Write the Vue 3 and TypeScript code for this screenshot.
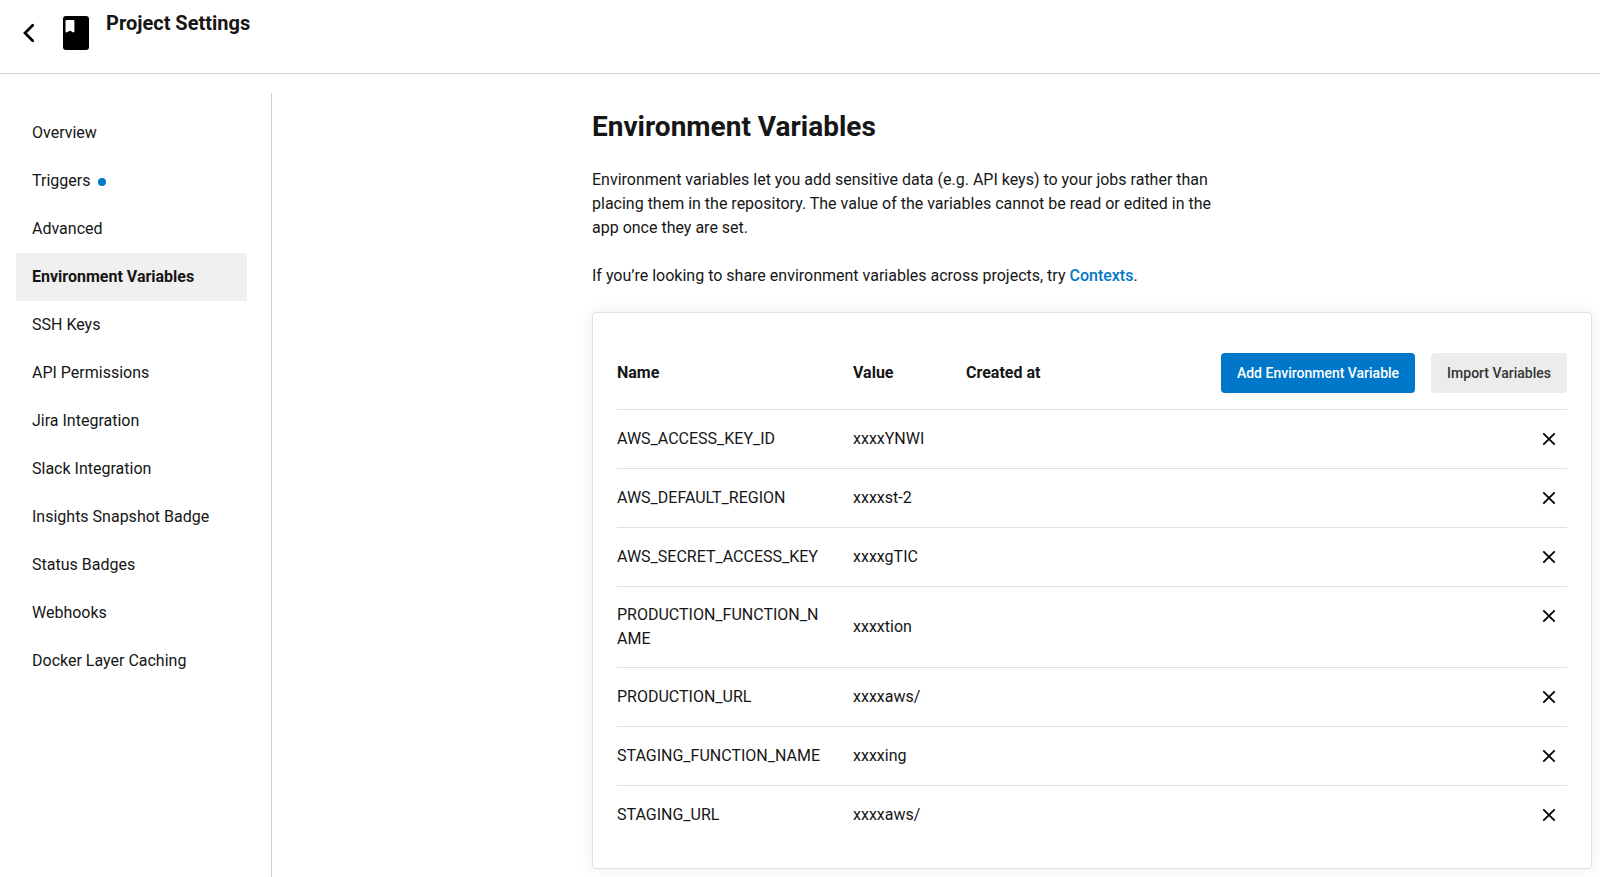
<script setup lang="ts">
import { ref } from 'vue'

interface NavItem {
  label: string
  isNew?: boolean
}

interface EnvVariable {
  name: string
  value: string
}

const navItems: NavItem[] = [
  { label: 'Overview' },
  { label: 'Triggers', isNew: true },
  { label: 'Advanced' },
  { label: 'Environment Variables' },
  { label: 'SSH Keys' },
  { label: 'API Permissions' },
  { label: 'Jira Integration' },
  { label: 'Slack Integration' },
  { label: 'Insights Snapshot Badge' },
  { label: 'Status Badges' },
  { label: 'Webhooks' },
  { label: 'Docker Layer Caching' },
]

const active = ref('Environment Variables')

const variables = ref<EnvVariable[]>([
  { name: 'AWS_ACCESS_KEY_ID', value: 'xxxxYNWI' },
  { name: 'AWS_DEFAULT_REGION', value: 'xxxxst-2' },
  { name: 'AWS_SECRET_ACCESS_KEY', value: 'xxxxgTIC' },
  { name: 'PRODUCTION_FUNCTION_NAME', value: 'xxxxtion' },
  { name: 'PRODUCTION_URL', value: 'xxxxaws/' },
  { name: 'STAGING_FUNCTION_NAME', value: 'xxxxing' },
  { name: 'STAGING_URL', value: 'xxxxaws/' },
])

function removeVariable(name: string) {
  variables.value = variables.value.filter((v) => v.name !== name)
}
</script>

<template>
  <div class="page">
    <header class="topbar">
      <a class="back" href="#" aria-label="Back">
        <svg width="12" height="20" viewBox="0 0 12 20" aria-hidden="true">
          <path d="M9.700 2.300 2 10l7.700 7.700" fill="none" stroke="currentColor" stroke-width="2.700" stroke-linecap="round" />
        </svg>
      </a>
      <svg class="project-icon" width="28" height="34" viewBox="0 0 28 34" aria-hidden="true">
        <path
          fill="currentColor"
          fill-rule="evenodd"
          d="M4 0h20a3 3 0 0 1 3 3v28a3 3 0 0 1-3 3H4a3 3 0 0 1-3-3V3a3 3 0 0 1 3-3zM4.500 4a1 1 0 0 0-1 1v10.500c0 .9.700 1.200 1.400.8l2.500-1.300q.6-.3 1.200 0l2.400 1.300c.7.4 1.400 0 1.400-.8V5a1 1 0 0 0-1-1z"
        />
      </svg>
      <h1 class="topbar-title">Project Settings</h1>
    </header>

    <div class="body">
      <nav class="sidebar" aria-label="Project settings">
        <a
          v-for="item in navItems"
          :key="item.label"
          class="nav-link"
          :class="{ active: item.label === active }"
          :aria-current="item.label === active ? 'page' : undefined"
          href="#"
          @click.prevent="active = item.label"
        >
          {{ item.label }}<span v-if="item.isNew" class="dot"></span>
        </a>
      </nav>

      <main class="content">
        <h2 class="heading">Environment Variables</h2>
        <div class="intro">
          <p>
            Environment variables let you add sensitive data (e.g. API keys) to your jobs rather than placing them in
            the repository. The value of the variables cannot be read or edited in the app once they are set.
          </p>
          <p>
            If you’re looking to share environment variables across projects, try
            <a class="link" href="#">Contexts</a>.
          </p>
        </div>

        <section class="card">
          <table class="vars">
            <thead>
              <tr>
                <th class="col-name" scope="col">Name</th>
                <th class="col-value" scope="col">Value</th>
                <th class="col-created" scope="col">Created at</th>
                <td class="col-actions">
                  <div class="actions">
                    <button class="btn primary" type="button">Add Environment Variable</button>
                    <button class="btn secondary" type="button">Import Variables</button>
                  </div>
                </td>
              </tr>
            </thead>
            <tbody>
              <tr v-for="v in variables" :key="v.name">
                <td class="name">{{ v.name }}</td>
                <td>{{ v.value }}</td>
                <td></td>
                <td class="remove-cell">
                  <button class="remove" type="button" :aria-label="`Delete ${v.name}`" @click="removeVariable(v.name)">
                    <svg width="14" height="14" viewBox="0 0 14 14" aria-hidden="true">
                      <path d="M1.300 1.300l11.400 11.400M12.700 1.300 1.300 12.700" fill="none" stroke="currentColor" stroke-width="1.800" />
                    </svg>
                  </button>
                </td>
              </tr>
            </tbody>
          </table>
        </section>
      </main>
    </div>
  </div>
</template>

<style>
body {
  margin: 0;
  background: #fff;
}
</style>

<style scoped>
.page {
  display: flex;
  flex-direction: column;
  min-height: 100vh;
  color: #161616;
  font-family: Roboto, 'Liberation Sans', sans-serif;
  font-size: 16px;
  line-height: 24px;
}

.page *,
.page {
  box-sizing: border-box;
}

.topbar {
  display: flex;
  align-items: flex-start;
  padding: 8px 24px 16px 23px;
  min-height: 74px;
  border-bottom: 1px solid #d0d0d0;
}

.back {
  display: flex;
  margin-top: 15px;
  color: #000;
}

.project-icon {
  margin: 8px 16px 0 27px;
  color: #000;
}

.topbar-title {
  margin: 0;
  font-size: 20px;
  line-height: 30px;
  font-weight: 700;
}

.body {
  display: flex;
  flex: 1;
  padding-top: 19px;
}

.sidebar {
  flex: 0 0 272px;
  padding: 16px 24px 16px 16px;
  border-right: 1px solid #d0d0d0;
}

.nav-link {
  display: flex;
  align-items: center;
  height: 48px;
  padding: 0 16px;
  color: inherit;
  text-decoration: none;
}

.nav-link.active {
  background: #f0f0f0;
  font-weight: 700;
}

.dot {
  width: 8px;
  height: 8px;
  margin: 2px 0 0 8px;
  border-radius: 50%;
  background: #0078ca;
}

.content {
  flex: 0 1 1000px;
  min-width: 0;
  margin: 0 8px 8px auto;
}

.heading {
  margin: 14px 0 21px;
  font-size: 28px;
  line-height: 40px;
  font-weight: 700;
}

.intro {
  max-width: 640px;
}

.intro p {
  margin: 0 0 24px;
}

.link {
  color: #0078ca;
  font-weight: 500;
  text-decoration: none;
}

.card {
  padding: 24px;
  border: 1px solid #e0e0e0;
  border-radius: 4px;
  background: #fff;
  box-shadow: 0 0 16px rgba(0, 0, 0, 0.08);
}

.vars {
  width: 100%;
  table-layout: fixed;
  border-collapse: separate;
  border-spacing: 0;
}

.vars th,
.vars td {
  padding: 16px 0;
  text-align: left;
  vertical-align: middle;
}

.vars tbody td {
  border-top: 1px solid #e0e0e0;
}

.vars .col-name {
  width: 236px;
}

.vars .col-value {
  width: 113px;
}

.vars .col-created {
  width: 170px;
}

.vars .name {
  padding-right: 32px;
  overflow-wrap: anywhere;
}

.actions {
  display: flex;
  justify-content: flex-end;
  gap: 16px;
}

.btn {
  height: 40px;
  padding: 0 16px;
  border: 0;
  border-radius: 4px;
  font-family: inherit;
  font-size: 14px;
  line-height: 20px;
  font-weight: 500;
  white-space: nowrap;
  cursor: pointer;
}

.primary {
  background: #0078ca;
  color: #fff;
}

.secondary {
  background: #ececec;
  color: #343434;
}

.vars .remove-cell {
  text-align: right;
  vertical-align: top;
}

.remove {
  display: flex;
  align-items: center;
  justify-content: center;
  width: 36px;
  height: 26px;
  margin-left: auto;
  padding: 0;
  border: 0;
  background: none;
  color: #000;
  cursor: pointer;
}
</style>
